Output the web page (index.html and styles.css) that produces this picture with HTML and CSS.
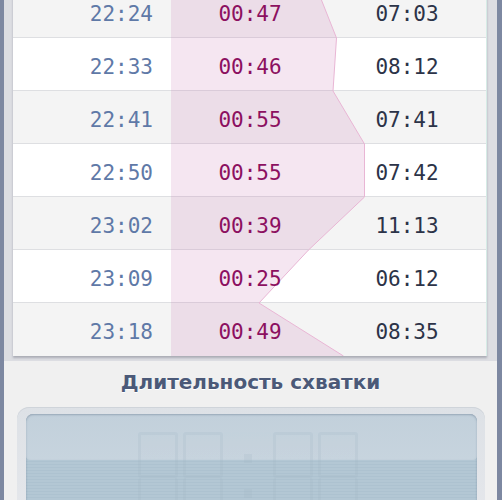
FILE: index.html
```html
<!DOCTYPE html>
<html>
<head>
<meta charset="utf-8">
<link rel="stylesheet" href="styles.css">
</head>
<body>
<div class="screen">
  <div class="list">
    <div class="table">
      <div class="row odd"><span class="c1">22:24</span><span class="c2">00:47</span><span class="c3">07:03</span></div>
      <div class="row"><span class="c1">22:33</span><span class="c2">00:46</span><span class="c3">08:12</span></div>
      <div class="row odd"><span class="c1">22:41</span><span class="c2">00:55</span><span class="c3">07:41</span></div>
      <div class="row"><span class="c1">22:50</span><span class="c2">00:55</span><span class="c3">07:42</span></div>
      <div class="row odd"><span class="c1">23:02</span><span class="c2">00:39</span><span class="c3">11:13</span></div>
      <div class="row"><span class="c1">23:09</span><span class="c2">00:25</span><span class="c3">06:12</span></div>
      <div class="row odd"><span class="c1">23:18</span><span class="c2">00:49</span><span class="c3">08:35</span></div>
      <svg class="chart" width="474" height="371" viewBox="0 0 474 371">
        <polygon points="158,0 302.5,0 323.5,53 320,106 351.5,159 351.5,212 295.5,265 246,318 330.5,371 158,371" fill="rgba(200,116,177,0.18)"/>
        <polyline points="302.5,0 323.5,53 320,106 351.5,159 351.5,212 295.5,265 246,318 330.5,371" fill="none" stroke="#e9b6d5" stroke-width="1"/>
      </svg>
    </div>
  </div>
  <h2 class="title">Длительность схватки</h2>
  <div class="lcd-frame">
    <div class="lcd">
      <div class="lcd-shine"></div>
      <div class="ghost">
        <div class="dig"><i></i><i></i></div>
        <div class="dig"><i></i><i></i></div>
        <div class="colon"><b></b><b></b></div>
        <div class="dig"><i></i><i></i></div>
        <div class="dig"><i></i><i></i></div>
      </div>
    </div>
  </div>
</div>
</body>
</html>
```
FILE: styles.css
```css
html, body {
  margin: 0;
  padding: 0;
}
body {
  background: #7d88a1;
  width: 502px;
  height: 500px;
  overflow: hidden;
}
.screen {
  margin: 0 5px 0 4px;
  height: 500px;
  overflow: hidden;
  background: #f0f0f0;
}
.list {
  background: #dcdde2;
  padding: 0 10px 5px 9px;
}
.table {
  position: relative;
  margin-top: -15px;
  box-shadow: 0 2px 2px rgba(80, 84, 100, 0.35);
  border-right: 1px solid #d6ece6;
  width: 473px;
}
.row {
  display: grid;
  grid-template-columns: 158px 158px 157px;
  height: 52px;
  border-bottom: 1px solid #dedfe2;
  align-items: center;
  background: #ffffff;
  font-family: "DejaVu Sans Mono", monospace;
  font-size: 21px;
}
.row.odd {
  background: #f4f4f4;
}
.row:last-of-type {
  border-bottom: none;
  height: 53px;
}
.row span {
  position: relative;
  z-index: 2;
  padding-top: 5px;
}
.c1 {
  color: #5f79a7;
  text-align: right;
  padding-right: 18px;
}
.c2 {
  color: #8c1060;
  text-align: center;
}
.c3 {
  color: #2c3348;
  text-align: center;
  padding-right: 1px;
}
.chart {
  position: absolute;
  left: 0;
  top: 0;
  z-index: 1;
}
.title {
  margin: 0;
  padding: 9px 0 0;
  height: 37px;
  text-align: center;
  font-family: "DejaVu Sans", sans-serif;
  font-weight: bold;
  font-size: 20px;
  color: #4b5978;
  text-shadow: 0 1px 0 #ffffff;
}
.lcd-frame {
  margin: 0 12px 0 13px;
  padding: 7px 8px 0 9px;
  height: 120px;
  border-radius: 12px;
  background: linear-gradient(#dde1e6, #e6e8ec);
  box-shadow: inset 0 1px 0 #cfd4da;
}
.lcd {
  position: relative;
  height: 120px;
  border-radius: 7px;
  background: repeating-linear-gradient(#b3c7d4 0, #b3c7d4 2px, #adc2d0 2px, #adc2d0 3px);
  box-shadow: inset 0 1px 2px rgba(70, 90, 115, 0.45);
  overflow: hidden;
}
.lcd-shine {
  height: 46px;
  background: linear-gradient(#c2d0db, #c7d4de);
  border-radius: 7px 7px 4px 4px;
  box-shadow: inset 0 1px 2px rgba(70, 90, 115, 0.35);
}
.ghost {
  position: absolute;
  left: 112px;
  top: 18px;
  display: flex;
  gap: 5px;
  opacity: 0.2;
}
.dig {
  width: 40px;
  display: flex;
  flex-direction: column;
}
.dig i {
  display: block;
  height: 40px;
  border: 3px solid #9fb4c4;
  border-radius: 3px;
}
.dig i + i {
  border-top: none;
  height: 46px;
}
.colon {
  width: 40px;
  display: flex;
  flex-direction: column;
  align-items: center;
  gap: 26px;
  padding-top: 22px;
}
.colon b {
  display: block;
  width: 8px;
  height: 9px;
  background: #9fb4c4;
}
```
